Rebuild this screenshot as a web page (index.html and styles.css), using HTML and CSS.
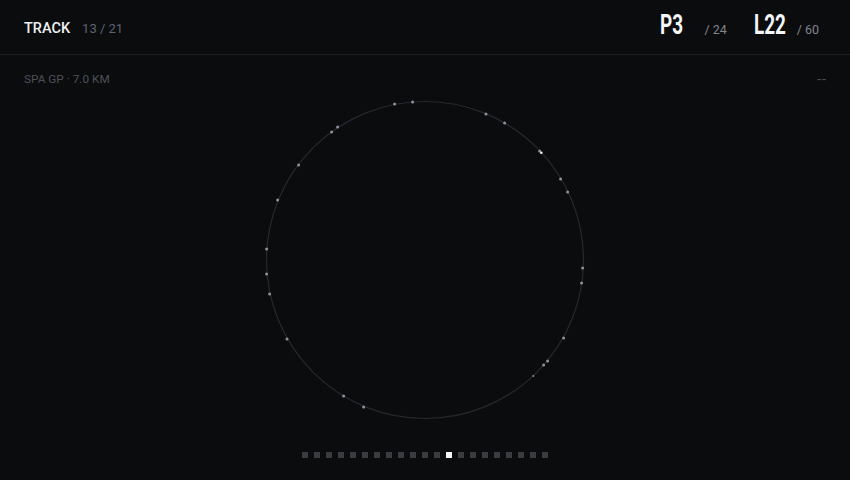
FILE: index.html
```html
<!DOCTYPE html>
<html>
<head>
<meta charset="utf-8">
<link rel="stylesheet" href="styles.css">
</head>
<body>
<div class="app">
  <header class="top">
    <div class="title">
      <span class="label">TRACK</span>
      <span class="count">13 / 21</span>
    </div>
    <div class="stats">
      <span class="big pos"><span class="sq">P3</span></span><span class="of of-pos">/ 24</span>
      <span class="big lap"><span class="sq">L22</span></span><span class="of">/ 60</span>
    </div>
  </header>
  <div class="sub">
    <span class="meta">SPA GP · 7.0 KM</span>
    <span class="dash">--</span>
  </div>
  <div class="stage">
    <svg class="track" width="330" height="330" viewBox="259.7 96.3 330 330">
      <circle cx="424.7" cy="261.3" r="158.5" fill="none" stroke="#26292e" stroke-width="1.2"/>
      <g fill="#8c939c">
        <circle cx="394.3" cy="105.3" r="1.5"/>
        <circle cx="412.3" cy="103.3" r="1.5"/>
        <circle cx="485.7" cy="115.3" r="1.5"/>
        <circle cx="504.3" cy="124.3" r="1.5"/>
        <circle cx="539.3" cy="152.3" r="1.5"/>
        <circle cx="560.3" cy="180.3" r="1.5"/>
        <circle cx="567.3" cy="193.3" r="1.5"/>
        <circle cx="582.3" cy="269.3" r="1.5"/>
        <circle cx="581.3" cy="284.3" r="1.5"/>
        <circle cx="563.3" cy="339.3" r="1.5"/>
        <circle cx="547.3" cy="362.3" r="1.5"/>
        <circle cx="543.3" cy="366.3" r="1.5"/>
        <circle cx="533" cy="377.3" r="1"/>
        <circle cx="363.3" cy="408.3" r="1.5"/>
        <circle cx="343.3" cy="397.3" r="1.5"/>
        <circle cx="286.7" cy="340.3" r="1.5"/>
        <circle cx="269.3" cy="295.3" r="1.5"/>
        <circle cx="266.3" cy="275.3" r="1.5"/>
        <circle cx="266.3" cy="250.3" r="1.5"/>
        <circle cx="277.3" cy="201.3" r="1.5"/>
        <circle cx="298.3" cy="166.3" r="1.5"/>
        <circle cx="331.3" cy="133.3" r="1.5"/>
        <circle cx="337.3" cy="128.3" r="1.5"/>
      </g>
      <circle cx="541" cy="154" r="1.3" fill="#f2f5f6"/>
    </svg>
  </div>
  <div class="pager">
    <span class="pg"></span><span class="pg"></span><span class="pg"></span><span class="pg"></span><span class="pg"></span><span class="pg"></span><span class="pg"></span><span class="pg"></span><span class="pg"></span><span class="pg"></span><span class="pg"></span><span class="pg"></span><span class="pg active"></span><span class="pg"></span><span class="pg"></span><span class="pg"></span><span class="pg"></span><span class="pg"></span><span class="pg"></span><span class="pg"></span><span class="pg"></span>
  </div>
</div>
</body>
</html>
```
FILE: styles.css
```css
html, body {
  margin: 0;
  padding: 0;
  background: #0b0c0e;
}
.app {
  width: 850px;
  height: 480px;
  display: flex;
  flex-direction: column;
  font-family: Roboto, "Liberation Sans", sans-serif;
  overflow: hidden;
}
.top {
  height: 55px;
  box-sizing: border-box;
  border-bottom: 1px solid #1d1f23;
  padding: 0 31px 0 24px;
  display: flex;
  justify-content: space-between;
  align-items: flex-start;
}
.title {
  display: flex;
  align-items: baseline;
  gap: 12px;
  padding-top: 19px;
  line-height: 20px;
}
.label {
  color: #eef2f4;
  font-size: 14.5px;
  font-weight: 500;
}
.count {
  color: #5b6373;
  font-size: 13px;
}
.stats {
  display: flex;
  align-items: baseline;
  padding-top: 10px;
  line-height: 30px;
}
.big {
  display: inline-block;
  white-space: nowrap;
  color: #f4f6f7;
  font-family: Roboto, "DejaVu Sans", sans-serif;
  font-weight: 700;
  font-size: 27px;
}
.sq {
  display: inline-block;
  transform: scaleX(0.7);
  transform-origin: 0 0;
}
.pos { width: 22px; margin-right: 22px; }
.lap { width: 34px; margin-right: 9px; }
.of {
  color: #80858d;
  font-size: 12.5px;
}
.of-pos { margin-right: 27px; }
.sub {
  display: flex;
  justify-content: space-between;
  padding: 16px 24px 0 24px;
  height: 24px;
  line-height: 16px;
}
.meta {
  color: #4c5159;
  font-size: 11.8px;
}
.dash {
  color: #4c5159;
  font-size: 14px;
  letter-spacing: 1px;
  margin-right: -1px;
}
.stage {
  display: flex;
  justify-content: center;
  height: 330px;
}
.track { display: block; }
.pager {
  display: flex;
  justify-content: center;
  gap: 6px;
  margin-top: 27px;
}
.pg {
  width: 6px;
  height: 6px;
  background: #393c41;
}
.pg.active { background: #f1f5f6; }
```
